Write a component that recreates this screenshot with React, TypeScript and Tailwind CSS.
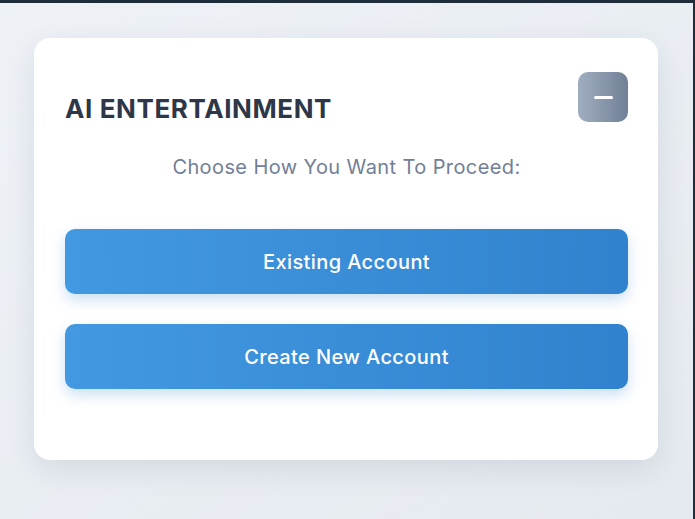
export default function App() {
  return (
    <div className="w-[695px] h-[519px] overflow-hidden bg-[#1f2d3a] font-['Inter','Noto_Sans',sans-serif]">
      <div className="mt-[3px] mr-[2px] h-[516px] bg-gradient-to-br from-[#eef2f7] to-[#e5eaf0] pt-[35px] pl-[34px] pr-[35px]">
        {/* card */}
        <div className="w-[624px] bg-white rounded-2xl shadow-[0_10px_30px_rgba(30,41,59,0.10)] pt-[34px] pb-[71px] pl-[31px] pr-[30px]">
          <div className="flex items-start justify-between">
            <h1 className="mt-[17px] text-[26px] leading-[39px] font-bold text-[#2d3748] tracking-[0.6px]">
              AI ENTERTAINMENT
            </h1>
            <button className="w-[50px] h-[50px] rounded-[10px] bg-gradient-to-r from-[#a0aec0] to-[#718096] flex items-center justify-center">
              <span className="block w-[19px] h-[3px] rounded-full bg-white" />
            </button>
          </div>

          <p className="mt-[25px] text-center text-[20px] leading-[28px] tracking-[0.4px] text-[#718096]">
            Choose How You Want To Proceed:
          </p>

          <div className="mt-[48px] flex flex-col gap-[30px]">
            <button className="h-[65px] w-full rounded-[10px] bg-gradient-to-r from-[#4299e1] to-[#3182ce] text-white text-[20px] tracking-[0.4px] font-medium shadow-[0_6px_14px_rgba(49,130,206,0.25)]">
              Existing Account
            </button>
            <button className="h-[65px] w-full rounded-[10px] bg-gradient-to-r from-[#4299e1] to-[#3182ce] text-white text-[20px] tracking-[0.4px] font-medium shadow-[0_6px_14px_rgba(49,130,206,0.25)]">
              Create New Account
            </button>
          </div>
        </div>
      </div>
    </div>
  );
}
